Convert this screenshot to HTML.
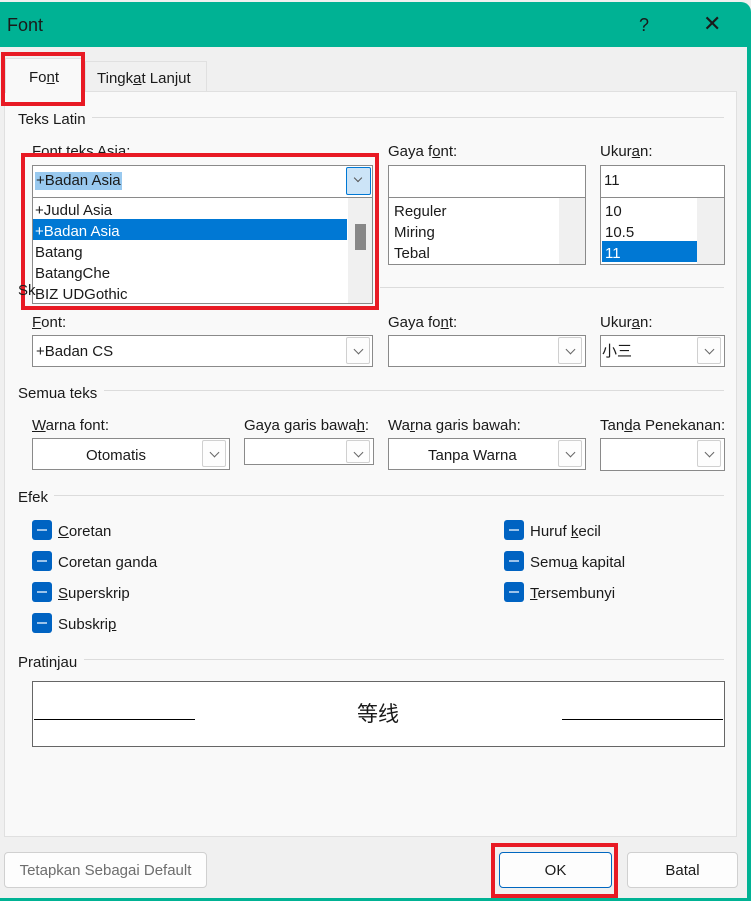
<!DOCTYPE html>
<html><head><meta charset="utf-8"><style>
*{box-sizing:border-box;margin:0;padding:0}
body{width:751px;height:901px;overflow:hidden;background:#f0f0f0;font-family:"Liberation Sans","Noto Sans CJK SC",sans-serif;font-size:15px;color:#1a1a1a;position:relative}
.a{position:absolute}
.t{position:absolute;white-space:nowrap;line-height:18px;margin-top:1px}
.box{position:absolute;background:#fff;border:1px solid #8a8a8a}
.dd{position:absolute;width:24px;height:27px;border:1px solid #d0d0d0;background:#fdfdfd;border-radius:2px}
.dd:after{content:"";position:absolute;left:8px;top:8px;width:6px;height:6px;border-right:1px solid #666;border-bottom:1px solid #666;transform:rotate(45deg)}
.line{position:absolute;height:1px;background:#dcdcdc}
.cb{position:absolute;width:20px;height:20px;background:#0063c2;border-radius:3px}
.cb:after{content:"";position:absolute;left:5px;top:9px;width:10px;height:2px;background:#9cc3ea}
u{text-decoration:underline}
.red{position:absolute;border:4px solid #e81a24}
.btn{position:absolute;height:36px;border:1px solid #d0d0d0;border-radius:4px;background:#fdfdfd;text-align:center;line-height:35px}
</style></head><body>
<div class="a" style="left:0;top:2px;width:751px;height:45px;background:#00b294;border-top-right-radius:10px"></div>
<div class="t" style="left:7px;top:15px;font-size:18px">Font</div>
<div class="t" style="left:639px;top:15px;font-size:18px">?</div>
<div class="t" style="left:703px;top:14px;font-size:22px;font-weight:300">✕</div>
<div class="a" style="left:747px;top:40px;width:4px;height:861px;background:#00b294"></div>
<div class="a" style="left:0;top:898px;width:751px;height:3px;background:#00b294"></div>

<div class="a" style="left:4px;top:91px;width:733px;height:746px;background:#f9f9f9;border:1px solid #e0e0e0"></div>
<div class="a" style="left:5px;top:58px;width:78px;height:35px;background:#f9f9f9;border:1px solid #e0e0e0;border-bottom:none"></div>
<div class="a" style="left:85px;top:61px;width:122px;height:30px;background:#f0f0f0;border:1px solid #e0e0e0;border-bottom:none"></div>
<div class="t" style="left:29px;top:68px">Fo<u>n</u>t</div>
<div class="t" style="left:97px;top:69px">Tingk<u>a</u>t Lanjut</div>
<div class="red" style="left:1px;top:52px;width:84px;height:54px"></div>

<div class="t" style="left:18px;top:110px">Teks Latin</div><div class="line" style="left:92px;top:117px;width:632px"></div>
<div class="t" style="left:32px;top:142px">Font teks Asia:</div>
<div class="box" style="left:32px;top:165px;width:341px;height:33px"></div>
<div class="t" style="left:35px;top:171px;background:#99c9ef;padding:0 1px">+Badan Asia</div>
<div class="a" style="left:346px;top:167px;width:25px;height:28px;background:#cce4f7;border:1px solid #0078d4;border-radius:2px"></div>
<div class="a" style="left:355px;top:175px;width:6px;height:6px;border-right:1px solid #555;border-bottom:1px solid #555;transform:rotate(45deg)"></div>
<div class="box" style="left:32px;top:197px;width:341px;height:107px"></div>
<div class="a" style="left:348px;top:198px;width:24px;height:105px;background:#f0f0f0"></div>
<div class="a" style="left:355px;top:224px;width:11px;height:26px;background:#888"></div>
<div class="a" style="left:33px;top:219px;width:314px;height:21px;background:#0078d4"></div>
<div class="t" style="left:35px;top:201px">+Judul Asia</div>
<div class="t" style="left:35px;top:222px;color:#fff">+Badan Asia</div>
<div class="t" style="left:35px;top:243px">Batang</div>
<div class="t" style="left:35px;top:264px">BatangChe</div>
<div class="t" style="left:35px;top:285px">BIZ UDGothic</div>
<div class="red" style="left:21px;top:153px;width:358px;height:157px"></div>

<div class="t" style="left:388px;top:142px">Gaya f<u>o</u>nt:</div>
<div class="box" style="left:388px;top:165px;width:198px;height:33px"></div>
<div class="box" style="left:388px;top:197px;width:198px;height:68px"></div>
<div class="a" style="left:559px;top:198px;width:26px;height:66px;background:#f0f0f0"></div>
<div class="t" style="left:394px;top:202px">Reguler</div>
<div class="t" style="left:394px;top:223px">Miring</div>
<div class="t" style="left:394px;top:244px">Tebal</div>

<div class="t" style="left:600px;top:142px">Ukur<u>a</u>n:</div>
<div class="box" style="left:600px;top:165px;width:125px;height:33px"></div>
<div class="t" style="left:604px;top:171px">11</div>
<div class="box" style="left:600px;top:197px;width:125px;height:68px"></div>
<div class="a" style="left:697px;top:198px;width:27px;height:66px;background:#f0f0f0"></div>
<div class="a" style="left:602px;top:241px;width:95px;height:21px;background:#0078d4"></div>
<div class="t" style="left:605px;top:202px">10</div>
<div class="t" style="left:605px;top:223px">10.5</div>
<div class="t" style="left:605px;top:244px;color:#fff">11</div>

<div class="line" style="left:380px;top:287px;width:344px"></div>
<div class="t" style="left:18px;top:281px">Sk</div>
<div class="t" style="left:32px;top:313px"><u>F</u>ont:</div>
<div class="box" style="left:32px;top:335px;width:341px;height:32px"></div><div class="t" style="left:36px;top:342px">+Badan CS</div><div class="dd" style="left:346px;top:337px"></div>
<div class="t" style="left:388px;top:313px">Gaya fo<u>n</u>t:</div>
<div class="box" style="left:388px;top:335px;width:198px;height:32px"></div><div class="dd" style="left:558px;top:337px"></div>
<div class="t" style="left:600px;top:313px">Ukur<u>a</u>n:</div>
<div class="box" style="left:600px;top:335px;width:125px;height:32px"></div><div class="t" style="left:602px;top:342px">小三</div><div class="dd" style="left:697px;top:337px"></div>

<div class="t" style="left:18px;top:384px">Semua teks</div><div class="line" style="left:104px;top:390px;width:620px"></div>
<div class="t" style="left:32px;top:416px"><u>W</u>arna font:</div>
<div class="box" style="left:32px;top:438px;width:198px;height:32px"></div><div class="t" style="left:86px;top:446px">Otomatis</div><div class="dd" style="left:202px;top:440px"></div>
<div class="t" style="left:244px;top:416px">Gaya garis bawa<u>h</u>:</div>
<div class="box" style="left:244px;top:438px;width:130px;height:27px"></div><div class="dd" style="left:346px;top:440px;height:23px"></div>
<div class="t" style="left:388px;top:416px">Wa<u>r</u>na garis bawah:</div>
<div class="box" style="left:388px;top:438px;width:198px;height:32px"></div><div class="t" style="left:428px;top:446px">Tanpa Warna</div><div class="dd" style="left:558px;top:440px"></div>
<div class="t" style="left:600px;top:416px">Tan<u>d</u>a Penekanan:</div>
<div class="box" style="left:600px;top:438px;width:125px;height:33px"></div><div class="dd" style="left:697px;top:440px"></div>

<div class="t" style="left:18px;top:488px">Efek</div><div class="line" style="left:54px;top:495px;width:670px"></div>
<div class="cb" style="left:32px;top:520px"></div><div class="t" style="left:58px;top:522px"><u>C</u>oretan</div>
<div class="cb" style="left:32px;top:551px"></div><div class="t" style="left:58px;top:553px">Coretan <u>g</u>anda</div>
<div class="cb" style="left:32px;top:582px"></div><div class="t" style="left:58px;top:584px"><u>S</u>uperskrip</div>
<div class="cb" style="left:32px;top:613px"></div><div class="t" style="left:58px;top:615px">Subskri<u>p</u></div>
<div class="cb" style="left:504px;top:520px"></div><div class="t" style="left:530px;top:522px">Huruf <u>k</u>ecil</div>
<div class="cb" style="left:504px;top:551px"></div><div class="t" style="left:530px;top:553px">Semu<u>a</u> kapital</div>
<div class="cb" style="left:504px;top:582px"></div><div class="t" style="left:530px;top:584px"><u>T</u>ersembunyi</div>

<div class="t" style="left:18px;top:653px">Pratinjau</div><div class="line" style="left:84px;top:659px;width:640px"></div>
<div class="a" style="left:32px;top:681px;width:693px;height:66px;background:#fff;border:1px solid #666"></div>
<div class="a" style="left:34px;top:719px;width:161px;height:1px;background:#000"></div>
<div class="a" style="left:562px;top:719px;width:161px;height:1px;background:#000"></div>
<div class="t" style="left:357px;top:702px;font-size:21px;line-height:24px">等线</div>

<div class="btn" style="left:4px;top:852px;width:203px;color:#6d6d6d">Tetapkan Sebagai Default</div>
<div class="btn" style="left:499px;top:852px;width:113px;border-color:#0067c0">OK</div>
<div class="btn" style="left:627px;top:852px;width:111px">Batal</div>
<div class="red" style="left:491px;top:843px;width:127px;height:55px"></div>
</body></html>
